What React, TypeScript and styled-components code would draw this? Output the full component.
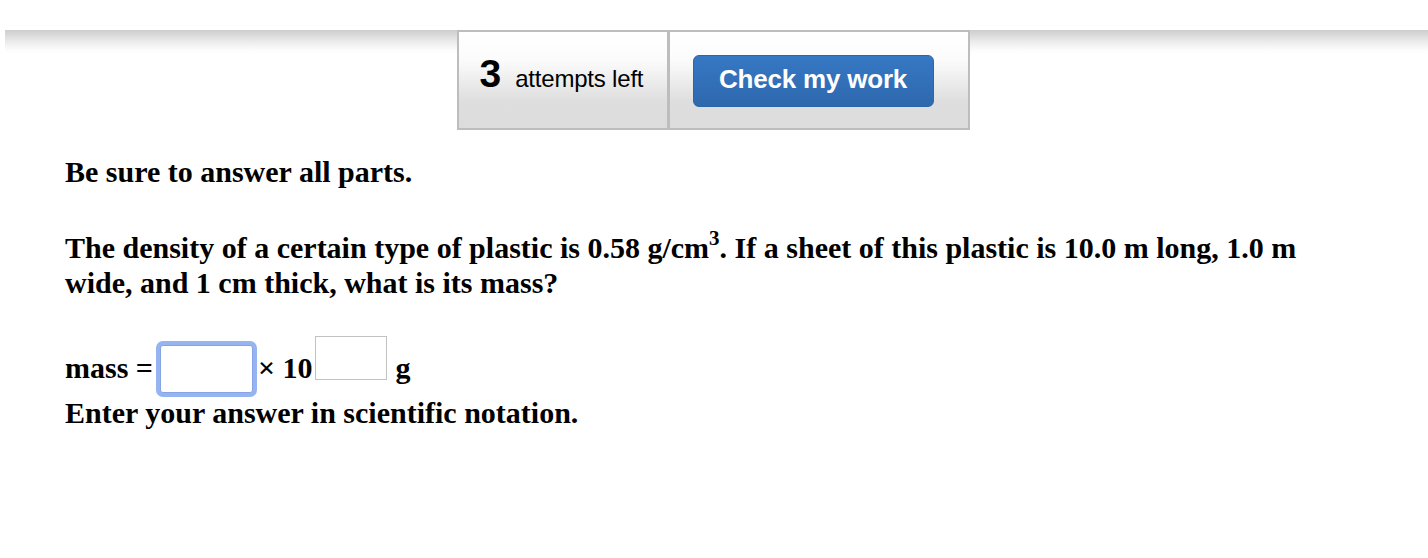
import React from 'react'
import styled, { createGlobalStyle } from 'styled-components'

const GlobalStyle = createGlobalStyle`
  body {
    margin: 0;
    background: #fff;
    font-family: "Liberation Serif", "Times New Roman", serif;
  }
`

const Page = styled.div`
  padding: 30px 0 0 5px;
`

const TopBand = styled.div`
  height: 100px;
  background: linear-gradient(to bottom, #cdcdcd 0px, #ececec 12px, #fcfcfc 20px, #fff 24px, #fff 100%);
  display: flex;
  justify-content: center;
  padding-right: 7px;
`

const Toolbar = styled.div`
  display: flex;
`

const Cell = styled.div<{ $w: number; $pad: number }>`
  width: ${(p) => p.$w}px;
  height: 100px;
  padding-left: ${(p) => p.$pad}px;
  box-sizing: border-box;
  border: 2px solid #bdbdbd;
  background: linear-gradient(to bottom, #fff 0%, #fbfbfb 30%, #dedede 72%, #dcdcdc 100%);
  display: flex;
  align-items: flex-start;
  & + & {
    border-left-width: 1px;
  }
`

const Attempts = styled.div`
  display: flex;
  align-items: baseline;
  margin-top: 22px;
  font-family: "Liberation Sans", Arial, sans-serif;
  color: #000;
`

const Count = styled.span`
  font-size: 39px;
  line-height: 39px;
  font-weight: bold;
  margin-right: 14px;
`

const Label = styled.span`
  font-size: 24px;
  letter-spacing: -0.2px;
`

const CheckButton = styled.button`
  width: 241px;
  height: 52px;
  margin-top: 23px;
  padding: 0 0 4px;
  border: 1px solid #2c66aa;
  border-radius: 6px;
  background: linear-gradient(to bottom, #3678c4, #2e68ad);
  color: #fff;
  font-family: "Liberation Sans", Arial, sans-serif;
  font-weight: bold;
  font-size: 26px;
  letter-spacing: -0.2px;
  cursor: pointer;
`

const Content = styled.div`
  padding: 24px 0 0 60px;
  color: #000;
  font-weight: bold;
  font-size: 30px;
  line-height: 35px;
`

const Para = styled.p<{ $gap: number }>`
  margin: 0 0 ${(p) => p.$gap}px;
  max-width: 1270px;
`

const Sup = styled.sup`
  font-size: 21px;
  line-height: 0;
  position: relative;
  top: -2px;
`

const Answer = styled.div`
  display: flex;
  align-items: flex-start;
`

const Word = styled.span<{ $ml?: number }>`
  margin-top: 14px;
  margin-left: ${(p) => p.$ml || 0}px;
  white-space: pre;
`

const MainInput = styled.input`
  width: 93px;
  height: 48px;
  box-sizing: border-box;
  margin: 9px 5px 0 7px;
  padding: 0 4px;
  border: 1px solid #86a4e4;
  border-radius: 3px;
  box-shadow: 0 0 0 4px #95b4f1;
  outline: none;
  background: #fff;
`

const SupInput = styled.input`
  width: 72px;
  height: 44px;
  padding: 0;
  margin: 0 0 0 2px;
  border: 1px solid #c2c2c2;
  box-sizing: border-box;
  background: #fff;
`

const Hint = styled.div`
  margin-top: 2px;
`

export default function App() {
  return (
    <>
      <GlobalStyle />
      <Page>
        <TopBand>
          <Toolbar>
            <Cell $w={212} $pad={21}>
              <Attempts>
                <Count>3</Count>
                <Label>attempts left</Label>
              </Attempts>
            </Cell>
            <Cell $w={301} $pad={23}>
              <CheckButton>Check my work</CheckButton>
            </Cell>
          </Toolbar>
        </TopBand>
        <Content>
          <Para $gap={41}>Be sure to answer all parts.</Para>
          <Para $gap={36}>
            The density of a certain type of plastic is 0.58 g/cm<Sup>3</Sup>. If a sheet of this plastic is 10.0 m long, 1.0 m wide, and 1 cm thick, what is its mass?
          </Para>
          <Answer>
            <Word>mass =</Word>
            <MainInput />
            <Word>× 10</Word>
            <SupInput />
            <Word $ml={9}>g</Word>
          </Answer>
          <Hint>Enter your answer in scientific notation.</Hint>
        </Content>
      </Page>
    </>
  )
}
